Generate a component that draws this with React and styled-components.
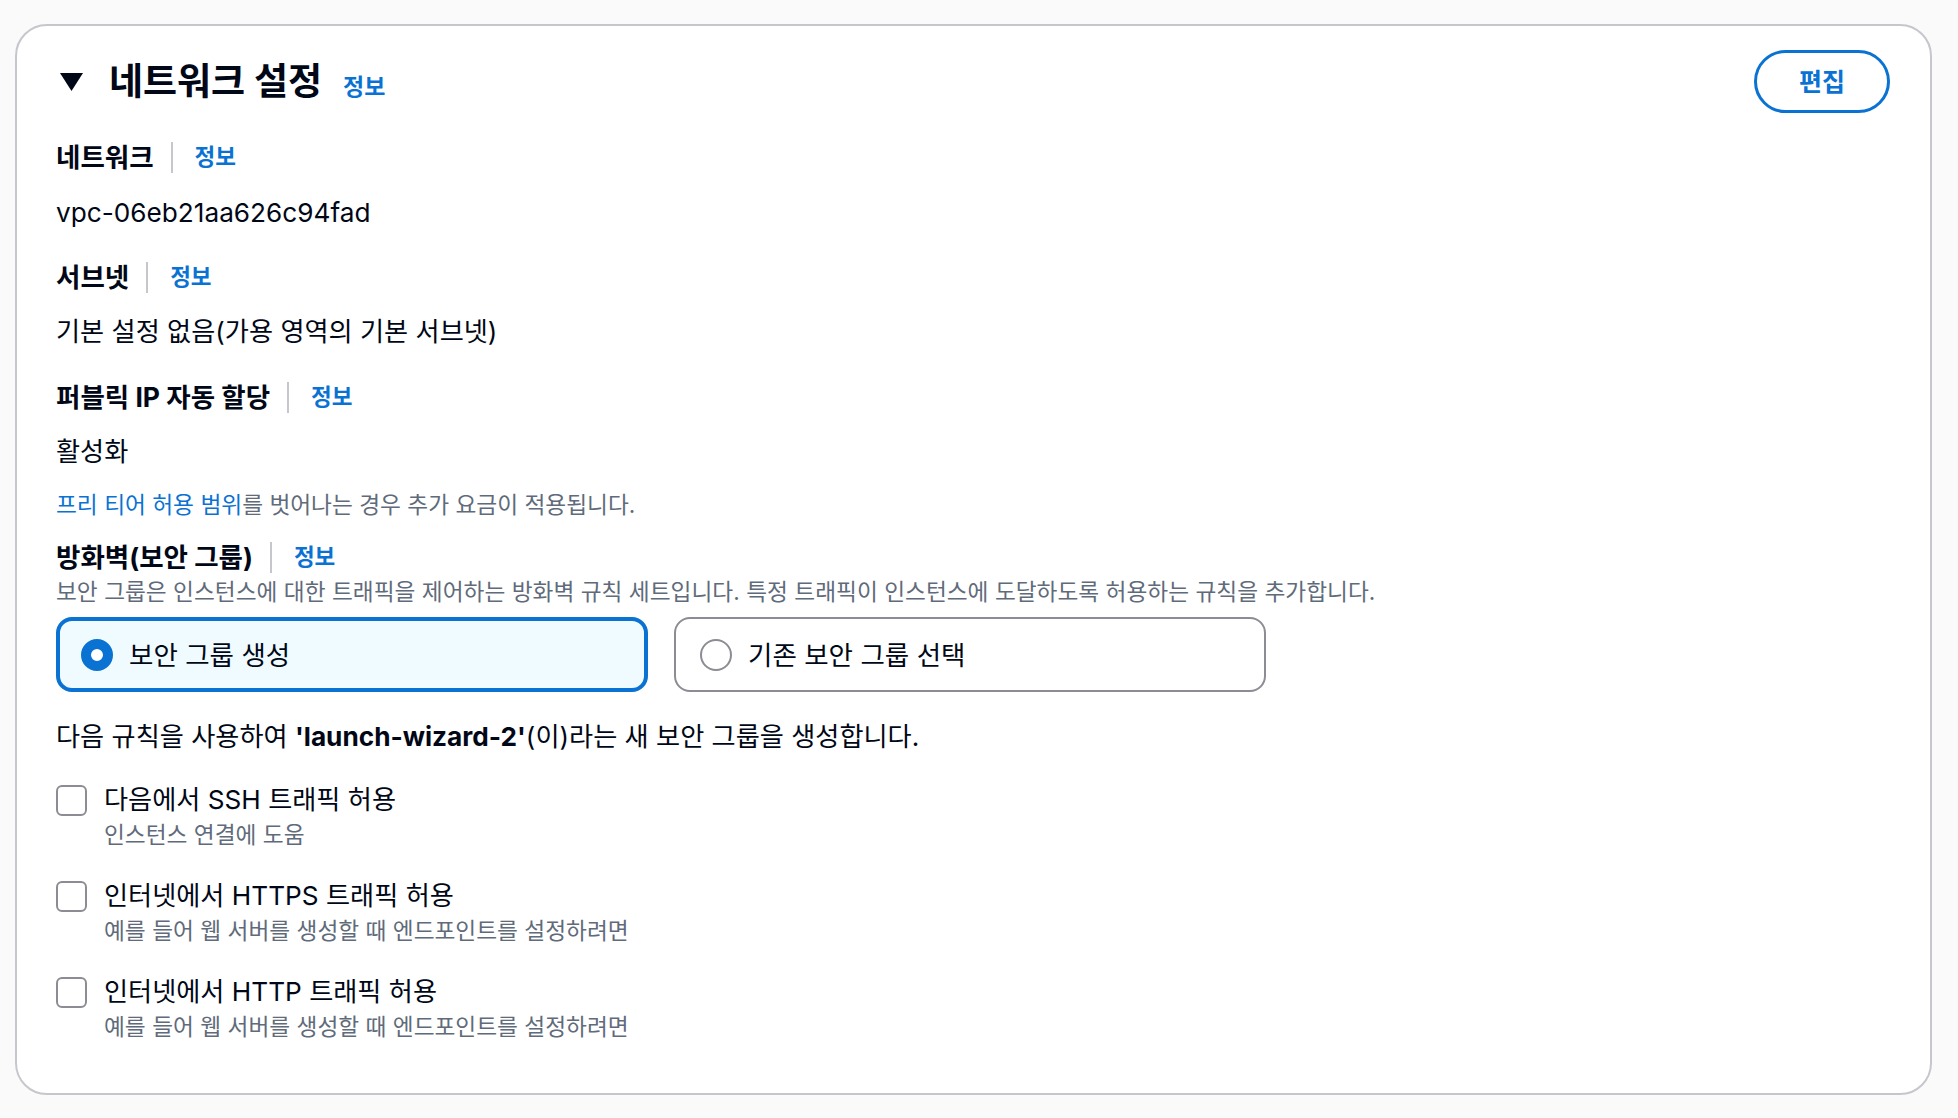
import React from "react";
import styled, { createGlobalStyle } from "styled-components";

const Global = createGlobalStyle`
  html, body { margin: 0; padding: 0; background: #fafafa; }
  body {
    font-family: "Inter", "Noto Sans CJK KR", sans-serif;
    color: #000716;
    -webkit-font-smoothing: antialiased;
  }
  * { box-sizing: border-box; }
`;

const Page = styled.div`
  padding: 24px 26px 24px 15px;
`;

const Card = styled.section`
  background: #ffffff;
  border: 2px solid #c6c6cd;
  border-radius: 32px;
  padding: 24px 40px 51px 39px;
  display: flex;
  flex-direction: column;
`;

const Header = styled.header`
  display: flex;
  align-items: center;
  justify-content: space-between;
  height: 63px;
`;

const TitleWrap = styled.div`
  display: flex;
  align-items: center;
`;

const Caret = styled.svg`
  width: 23px;
  height: 18px;
  margin: 0 26px 0 4px;
  flex: none;
`;

const Title = styled.h2`
  margin: 0;
  padding-top: 6px;
  font-size: 37px;
  font-weight: 700;
  line-height: 46px;
`;

const TitleInfo = styled.a`
  font-size: 23px;
  font-weight: 700;
  color: #0972d3;
  margin-left: 21px;
  text-decoration: none;
`;

const EditButton = styled.button`
  width: 136px;
  height: 63px;
  border: 3px solid #0972d3;
  border-radius: 32px;
  background: #ffffff;
  color: #0972d3;
  font-family: inherit;
  font-size: 25px;
  font-weight: 700;
  padding: 0 0 4px;
  cursor: pointer;
`;

const Block = styled.div`
  margin-top: ${(p) => p.$mt || 0}px;
`;

const Label = styled.div`
  display: flex;
  align-items: center;
  height: 34px;
  font-size: 26.5px;
  font-weight: 700;
  line-height: 34px;
`;

const Divider = styled.span`
  width: 2px;
  height: 31px;
  background: #c6c6cd;
  margin: 0 22px 0 17px;
`;

const Info = styled.a`
  font-size: 22.5px;
  font-weight: 700;
  color: #0972d3;
  text-decoration: none;
`;

const Value = styled.div`
  font-size: 26.2px;
  line-height: 34px;
  color: #000716;
`;

const Small = styled.div`
  font-size: 22.7px;
  line-height: 30px;
  color: #5f6b7a;
`;

const InlineLink = styled.a`
  color: #0972d3;
  text-decoration: none;
`;

const Tiles = styled.div`
  display: grid;
  grid-template-columns: 592px 592px;
  column-gap: 26px;
`;

const Tile = styled.label`
  height: 75px;
  border-radius: 16px;
  display: flex;
  align-items: center;
  border: ${(p) => (p.$checked ? "4px solid #0972d3" : "2px solid #8c8c94")};
  background: ${(p) => (p.$checked ? "#f0fbff" : "#ffffff")};
  padding-left: ${(p) => (p.$checked ? 21 : 24)}px;
  cursor: pointer;
`;

const Radio = styled.span`
  width: 32px;
  height: 32px;
  border-radius: 50%;
  flex: none;
  background: #ffffff;
  border: ${(p) => (p.$checked ? "10px solid #0972d3" : "2px solid #8c8c94")};
`;

const TileText = styled.span`
  margin-left: 16px;
  font-size: 26.5px;
  line-height: 34px;
  color: #000716;
`;

const CheckItem = styled.div`
  display: grid;
  grid-template-columns: 31px 1fr;
  column-gap: 17px;
  margin-top: ${(p) => p.$mt}px;
`;

const Box = styled.span`
  width: 31px;
  height: 31px;
  margin-top: 2px;
  border: 2px solid #8c8c94;
  border-radius: 6px;
  background: #ffffff;
`;

const CheckLabel = styled.div`
  font-size: 26.2px;
  line-height: 34px;
  color: #000716;
`;

const CheckSub = styled.div`
  margin-top: 3px;
  font-size: 22.7px;
  line-height: 30px;
  color: #5f6b7a;
`;

const Strong = styled.b`
  font-weight: 700;
`;

function FieldLabel({ children }) {
  return (
    <Label>
      {children}
      <Divider />
      <Info>정보</Info>
    </Label>
  );
}

const checks = [
  { label: "다음에서 SSH 트래픽 허용", sub: "인스턴스 연결에 도움", mt: 29 },
  {
    label: "인터넷에서 HTTPS 트래픽 허용",
    sub: "예를 들어 웹 서버를 생성할 때 엔드포인트를 설정하려면",
    mt: 29,
  },
  {
    label: "인터넷에서 HTTP 트래픽 허용",
    sub: "예를 들어 웹 서버를 생성할 때 엔드포인트를 설정하려면",
    mt: 29,
  },
];

export default function App() {
  return (
    <>
      <Global />
      <Page>
        <Card>
          <Header>
            <TitleWrap>
              <Caret viewBox="0 0 23 18">
                <polygon points="0,0 23,0 11.5,18" fill="#000716" />
              </Caret>
              <Title>
                네트워크 설정
                <TitleInfo>정보</TitleInfo>
              </Title>
            </TitleWrap>
            <EditButton>편집</EditButton>
          </Header>

          <Block $mt={27}>
            <FieldLabel>네트워크</FieldLabel>
          </Block>
          <Block $mt={22}>
            <Value>vpc-06eb21aa626c94fad</Value>
          </Block>

          <Block $mt={30}>
            <FieldLabel>서브넷</FieldLabel>
          </Block>
          <Block $mt={21}>
            <Value>기본 설정 없음(가용 영역의 기본 서브넷)</Value>
          </Block>

          <Block $mt={31}>
            <FieldLabel>퍼블릭 IP 자동 할당</FieldLabel>
          </Block>
          <Block $mt={21}>
            <Value>활성화</Value>
          </Block>
          <Block $mt={21}>
            <Small>
              <InlineLink>프리 티어 허용 범위</InlineLink>를 벗어나는 경우 추가 요금이
              적용됩니다.
            </Small>
          </Block>

          <Block $mt={20}>
            <FieldLabel>방화벽(보안 그룹)</FieldLabel>
          </Block>
          <Block $mt={3}>
            <Small>
              보안 그룹은 인스턴스에 대한 트래픽을 제어하는 방화벽 규칙 세트입니다. 특정
              트래픽이 인스턴스에 도달하도록 허용하는 규칙을 추가합니다.
            </Small>
          </Block>

          <Block $mt={10}>
            <Tiles>
              <Tile $checked>
                <Radio $checked />
                <TileText>보안 그룹 생성</TileText>
              </Tile>
              <Tile>
                <Radio />
                <TileText>기존 보안 그룹 선택</TileText>
              </Tile>
            </Tiles>
          </Block>

          <Block $mt={28}>
            <Value>
              다음 규칙을 사용하여 <Strong>'launch-wizard-2'</Strong>(이)라는 새 보안
              그룹을 생성합니다.
            </Value>
          </Block>

          {checks.map((c) => (
            <CheckItem key={c.label} $mt={c.mt}>
              <Box />
              <div>
                <CheckLabel>{c.label}</CheckLabel>
                <CheckSub>{c.sub}</CheckSub>
              </div>
            </CheckItem>
          ))}
        </Card>
      </Page>
    </>
  );
}
